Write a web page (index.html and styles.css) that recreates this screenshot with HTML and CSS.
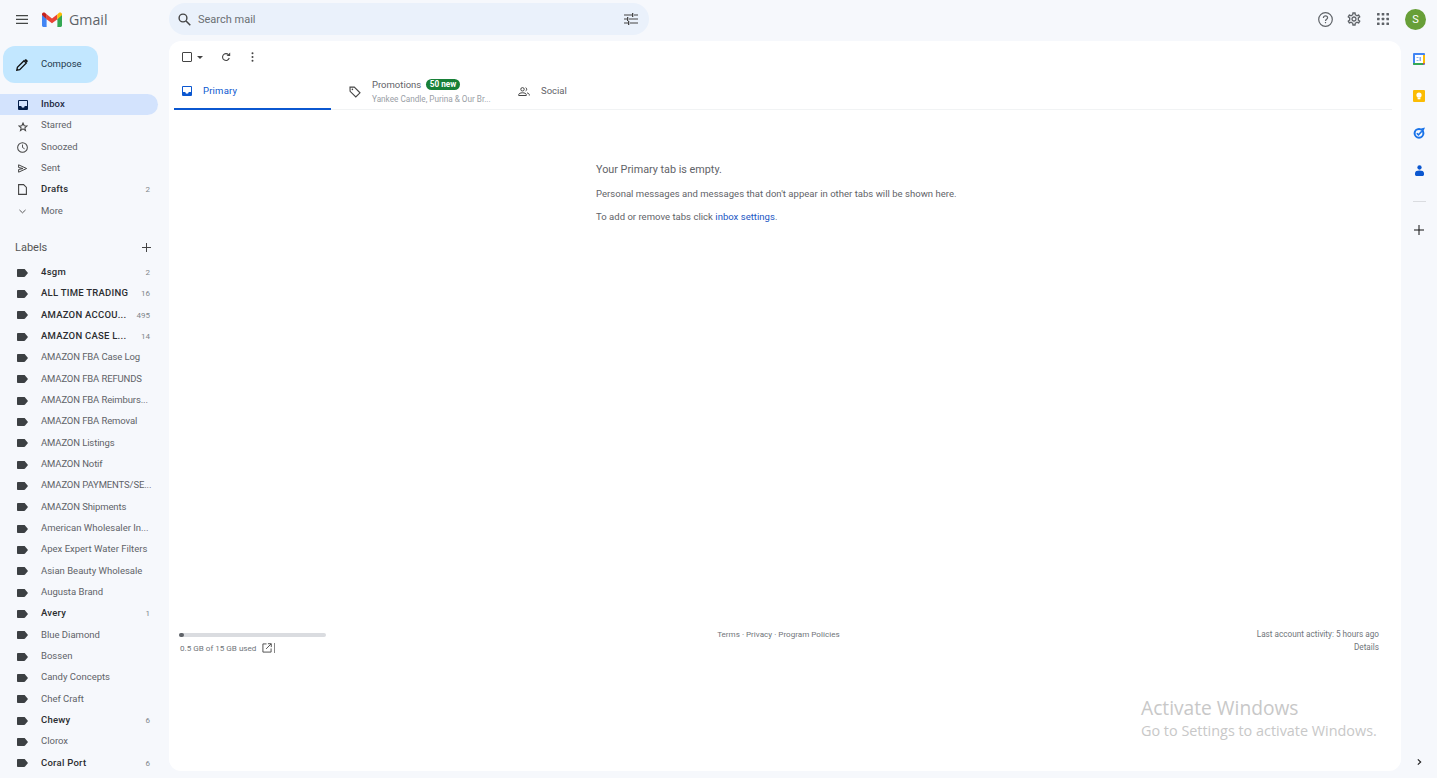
FILE: index.html
```html
<!DOCTYPE html>
<html lang="en">
<head>
<meta charset="utf-8">
<title>Gmail</title>
<link rel="stylesheet" href="styles.css">
</head>
<body>
<svg class="defs" width="0" height="0" aria-hidden="true">
  <symbol id="tag" viewBox="0 0 12 10" preserveAspectRatio="none"><path d="M1.2 0h6.6c.4 0 .8.2 1 .5L12 5 8.800 9.500c-.2.3-.6.5-1 .5H1.200C.5 10 0 9.500 0 8.800V1.200C0 .5.500 0 1.200 0z"/></symbol>
</svg>
<div class="app">
  <aside class="side">
    <div class="brand">
      <svg class="burger" viewBox="0 0 14 10" width="12" height="9" preserveAspectRatio="none"><path d="M0 0h14v1.300H0zM0 4.300h14v1.300H0zM0 8.700h14V10H0z"/></svg>
      <svg class="logo" viewBox="0 0 20 15" width="20" height="15">
        <path fill="#4285f4" d="M0 3v10.600C0 14.400.6 15 1.400 15h3.200V7.200L2 3.500z"/>
        <path fill="#34a853" d="M15.400 7.200V15h3.200c.8 0 1.400-.6 1.400-1.400V3l-2 .5z"/>
        <path fill="#ea4335" d="M4.600 7.200V2.300L10 6.400l5.400-4.100v4.900L10 11.200z"/>
        <path fill="#c5221f" d="M0 2.100V3l4.600 4.200V2.300L3.200.9C1.900-.1 0 .7 0 2.100z"/>
        <path fill="#fbbc04" d="M15.400 2.300v4.900L20 3v-.9C20 .7 18.100-.1 16.800.9z"/>
      </svg>
      <span class="brand-name">Gmail</span>
    </div>
    <button class="compose">
      <svg viewBox="0 0 12 12" width="12" height="12"><path d="M.8 11.200l.6-2.900L8 1.700l2.300 2.300-6.600 6.600z" fill="none" stroke="#111" stroke-width="1.300"/><path d="M8.400 1.200l.6-.6c.5-.5 1.100-.5 1.500-.1l1 1c.4.400.4 1-.1 1.500l-.6.600z" fill="#111"/></svg>
      <span>Compose</span>
    </button>
    <nav class="nav">
      <a class="row active"><span class="ic"><svg viewBox="0 0 10 10" width="10" height="10"><path fill="#041e49" d="M1 0h8a1 1 0 0 1 1 1v8a1 1 0 0 1-1 1H1a1 1 0 0 1-1-1V1a1 1 0 0 1 1-1zm0 6h2.300a1.700 1.700 0 0 0 3.400 0H9V1H1z"/></svg></span><span class="txt">Inbox</span></a>
      <a class="row"><span class="ic low"><svg viewBox="0 0 12 12" width="10" height="10"><path fill="none" stroke="#444" stroke-width="1.300" d="M6 1.300l1.400 3.200 3.400.3-2.600 2.200.8 3.300L6 8.300 3 10.300l.8-3.300L1.200 4.800l3.400-.3z"/></svg></span><span class="txt">Starred</span></a>
      <a class="row"><span class="ic"><svg viewBox="0 0 12 12" width="11" height="11"><circle cx="6" cy="6" r="5.300" fill="none" stroke="#444" stroke-width="1.100"/><path d="M6 2.800V6l2.300 1.400" fill="none" stroke="#444"/></svg></span><span class="txt">Snoozed</span></a>
      <a class="row"><span class="ic"><svg viewBox="0 0 10 9" width="10" height="9"><path fill="none" stroke="#444" d="M.6.8l8 3.700-8 3.700V5.500L5 4.500.6 3.500z"/></svg></span><span class="txt">Sent</span></a>
      <a class="row bold"><span class="ic"><svg viewBox="0 0 9 11" width="9" height="11"><path fill="none" stroke="#444" stroke-width="1.100" d="M.6.6h5l2.800 2.800v7H.6z"/></svg></span><span class="txt">Drafts</span><span class="num">2</span></a>
      <a class="row"><span class="ic"><svg viewBox="0 0 8 5" width="7" height="5"><path fill="none" stroke="#444" d="M.5.7L4 4 7.500.7"/></svg></span><span class="txt">More</span></a>
    </nav>
    <div class="labels-head"><span>Labels</span><svg viewBox="0 0 9 9" width="9" height="9"><path d="M4 0h1v4h4v1H5v4H4V5H0V4h4z" fill="#444"/></svg></div>
    <div class="nav">
      <a class="row bold"><span class="ic"><svg class="tag"><use href="#tag"/></svg></span><span class="txt">4sgm</span><span class="num">2</span></a>
      <a class="row bold"><span class="ic"><svg class="tag"><use href="#tag"/></svg></span><span class="txt">ALL TIME TRADING</span><span class="num">16</span></a>
      <a class="row bold"><span class="ic"><svg class="tag"><use href="#tag"/></svg></span><span class="txt">AMAZON ACCOU...</span><span class="num">495</span></a>
      <a class="row bold"><span class="ic"><svg class="tag"><use href="#tag"/></svg></span><span class="txt">AMAZON CASE L...</span><span class="num">14</span></a>
      <a class="row amz"><span class="ic"><svg class="tag"><use href="#tag"/></svg></span><span class="txt">AMAZON FBA Case Log</span></a>
      <a class="row amz"><span class="ic"><svg class="tag"><use href="#tag"/></svg></span><span class="txt">AMAZON FBA REFUNDS</span></a>
      <a class="row amz"><span class="ic"><svg class="tag"><use href="#tag"/></svg></span><span class="txt">AMAZON FBA Reimburs...</span></a>
      <a class="row amz"><span class="ic"><svg class="tag"><use href="#tag"/></svg></span><span class="txt">AMAZON FBA Removal</span></a>
      <a class="row amz"><span class="ic"><svg class="tag"><use href="#tag"/></svg></span><span class="txt">AMAZON Listings</span></a>
      <a class="row amz"><span class="ic"><svg class="tag"><use href="#tag"/></svg></span><span class="txt">AMAZON Notif</span></a>
      <a class="row amz"><span class="ic"><svg class="tag"><use href="#tag"/></svg></span><span class="txt">AMAZON PAYMENTS/SE...</span></a>
      <a class="row amz"><span class="ic"><svg class="tag"><use href="#tag"/></svg></span><span class="txt">AMAZON Shipments</span></a>
      <a class="row"><span class="ic"><svg class="tag"><use href="#tag"/></svg></span><span class="txt">American Wholesaler In...</span></a>
      <a class="row"><span class="ic"><svg class="tag"><use href="#tag"/></svg></span><span class="txt">Apex Expert Water Filters</span></a>
      <a class="row"><span class="ic"><svg class="tag"><use href="#tag"/></svg></span><span class="txt">Asian Beauty Wholesale</span></a>
      <a class="row"><span class="ic"><svg class="tag"><use href="#tag"/></svg></span><span class="txt">Augusta Brand</span></a>
      <a class="row bold"><span class="ic"><svg class="tag"><use href="#tag"/></svg></span><span class="txt">Avery</span><span class="num">1</span></a>
      <a class="row"><span class="ic"><svg class="tag"><use href="#tag"/></svg></span><span class="txt">Blue Diamond</span></a>
      <a class="row"><span class="ic"><svg class="tag"><use href="#tag"/></svg></span><span class="txt">Bossen</span></a>
      <a class="row"><span class="ic"><svg class="tag"><use href="#tag"/></svg></span><span class="txt">Candy Concepts</span></a>
      <a class="row"><span class="ic"><svg class="tag"><use href="#tag"/></svg></span><span class="txt">Chef Craft</span></a>
      <a class="row bold"><span class="ic"><svg class="tag"><use href="#tag"/></svg></span><span class="txt">Chewy</span><span class="num">6</span></a>
      <a class="row"><span class="ic"><svg class="tag"><use href="#tag"/></svg></span><span class="txt">Clorox</span></a>
      <a class="row bold"><span class="ic"><svg class="tag"><use href="#tag"/></svg></span><span class="txt">Coral Port</span><span class="num">6</span></a>
    </div>
  </aside>

  <div class="center">
    <header class="top">
      <div class="search">
        <svg viewBox="0 0 13 13" width="13" height="13"><circle cx="5" cy="5" r="3.900" fill="none" stroke="#444" stroke-width="1.400"/><path d="M8 8l4.300 4.300" stroke="#444" stroke-width="1.500"/></svg>
        <span class="search-text">Search mail</span>
        <svg class="tune" viewBox="0 0 14 12" width="14" height="12"><path fill="#444" d="M0 1.500h8v1H0zM10 1.500h4v1h-4zM8 0h1.300v4H8zM0 9.500h4v1H0zM6 9.500h8v1H6zM4 8h1.300v4H4zM0 5.500h3v1H0zM5 5.500h9v1H5zM3 4h1.300v4H3z"/></svg>
      </div>
      <div class="top-icons">
        <svg class="ti-help" viewBox="0 0 15 15" width="15" height="15"><circle cx="7.500" cy="7.500" r="6.800" fill="none" stroke="#5f6368" stroke-width="1.200"/><path d="M5.400 5.900c0-1.200 1-2 2.100-2 1.200 0 2.100.8 2.100 1.900 0 1.500-2.100 1.600-2.100 3.200" fill="none" stroke="#5f6368" stroke-width="1.200"/><path fill="#5f6368" d="M6.900 10h1.200v1.200H6.900z"/></svg>
        <svg viewBox="0 0 24 24" width="16" height="16"><path fill="#5f6368" d="M19.430 12.980c.04-.32.070-.64.070-.98 0-.34-.03-.66-.07-.98l2.110-1.650c.19-.15.240-.42.120-.64l-2-3.460c-.09-.16-.26-.25-.44-.25-.06 0-.12.010-.17.030l-2.490 1c-.52-.4-1.080-.73-1.690-.98l-.38-2.650C14.460 2.180 14.250 2 14 2h-4c-.25 0-.46.180-.49.420l-.38 2.650c-.61.250-1.170.590-1.690.980l-2.490-1c-.06-.02-.12-.03-.18-.03-.17 0-.34.090-.43.250l-2 3.460c-.13.220-.07.490.12.640l2.110 1.650c-.04.320-.07.650-.07.980 0 .330.030.660.070.980l-2.110 1.650c-.19.150-.24.420-.12.640l2 3.460c.09.160.26.250.44.250.06 0 .12-.01.17-.03l2.490-1c.52.400 1.080.730 1.690.980l.38 2.650c.03.240.24.420.49.420h4c.25 0 .46-.18.49-.42l.38-2.650c.61-.25 1.170-.59 1.690-.98l2.490 1c.06.020.12.030.18.030.17 0 .34-.09.43-.25l2-3.460c.12-.22.070-.49-.12-.64l-2.110-1.650zm-1.980-1.710c.04.310.05.520.05.730 0 .210-.02.430-.05.730l-.14 1.130.89.700 1.080.840-.7 1.210-1.270-.51-1.040-.42-.9.680c-.43.320-.84.560-1.250.730l-1.060.430-.16 1.130-.2 1.350h-1.400l-.19-1.350-.16-1.130-1.060-.43c-.43-.18-.83-.41-1.230-.71l-.91-.7-1.060.430-1.270.510-.7-1.210 1.080-.84.890-.7-.14-1.130c-.03-.31-.05-.54-.05-.74s.020-.43.050-.73l.14-1.130-.89-.7-1.080-.84.7-1.210 1.270.510 1.040.420.9-.68c.43-.32.84-.56 1.250-.73l1.060-.43.160-1.130.2-1.350h1.390l.19 1.350.16 1.130 1.060.43c.43.180.83.410 1.230.710l.91.700 1.060-.43 1.270-.51.7 1.210-1.070.850-.89.700.14 1.130zM12 8c-2.210 0-4 1.790-4 4s1.790 4 4 4 4-1.790 4-4-1.790-4-4-4zm0 6c-1.100 0-2-.9-2-2s.9-2 2-2 2 .9 2 2-.9 2-2 2z"/></svg>
        <svg class="ti-apps" viewBox="0 0 12 12" width="12" height="12"><g fill="#5f6368"><rect width="2.600" height="2.600" rx=".5"/><rect x="4.700" width="2.600" height="2.600" rx=".5"/><rect x="9.400" width="2.600" height="2.600" rx=".5"/><rect y="4.700" width="2.600" height="2.600" rx=".5"/><rect x="4.700" y="4.700" width="2.600" height="2.600" rx=".5"/><rect x="9.400" y="4.700" width="2.600" height="2.600" rx=".5"/><rect y="9.400" width="2.600" height="2.600" rx=".5"/><rect x="4.700" y="9.400" width="2.600" height="2.600" rx=".5"/><rect x="9.400" y="9.400" width="2.600" height="2.600" rx=".5"/></g></svg>
        <span class="avatar">S</span>
      </div>
    </header>
    <main class="card">
      <div class="toolbar">
        <span class="check"></span>
        <span class="caret"></span>
        <svg class="refresh" viewBox="0 0 12 12" width="10" height="10"><path fill="none" stroke="#444" stroke-width="1.300" d="M9.900 7.200A4.100 4.100 0 1 1 9 3.300"/><path fill="#444" d="M11 .6v4.300H6.700z"/></svg>
        <svg class="dots" viewBox="0 0 3 11" width="3" height="10"><g fill="#444"><circle cx="1.500" cy="1.300" r="1.100"/><circle cx="1.500" cy="5.500" r="1.100"/><circle cx="1.500" cy="9.700" r="1.100"/></g></svg>
      </div>
      <div class="tabs">
        <div class="tab tab-primary">
          <svg viewBox="0 0 10 10" width="10" height="10"><path fill="#0b57d0" d="M1 0h8a1 1 0 0 1 1 1v8a1 1 0 0 1-1 1H1a1 1 0 0 1-1-1V1a1 1 0 0 1 1-1zm0 6h2.300a1.700 1.700 0 0 0 3.400 0H9V1H1z"/></svg>
          <span>Primary</span>
        </div>
        <div class="tab tab-promo">
          <svg viewBox="0 0 12 12" width="12" height="12"><path fill="none" stroke="#444" stroke-width="1.100" d="M1 1.100h4.300l5.700 5.700-4.200 4.200L1.100 5.300z"/><circle cx="3.400" cy="3.400" r=".8" fill="#444"/></svg>
          <div class="promo-text">
            <div class="promo-line"><span>Promotions</span><span class="badge">50 new</span></div>
            <div class="promo-sub">Yankee Candle, Purina &amp; Our Br...</div>
          </div>
        </div>
        <div class="tab tab-social">
          <svg viewBox="0 0 12 9" width="12" height="9"><g fill="none" stroke="#444"><circle cx="4.500" cy="2.300" r="1.700"/><path d="M.7 8.500V7.700c0-1.200 1.700-1.900 3.800-1.900s3.800.7 3.800 1.900v.8z"/><path d="M7.600.7a1.700 1.700 0 0 1 0 3.200M9 5.900c1.300.3 2.300.9 2.300 1.800v.8"/></g></svg>
          <span>Social</span>
        </div>
      </div>
      <section class="empty">
        <h2>Your Primary tab is empty.</h2>
        <p>Personal messages and messages that don't appear in other tabs will be shown here.</p>
        <p>To add or remove tabs click <a>inbox settings</a>.</p>
      </section>
      <footer class="foot">
        <div class="storage">
          <div class="bar"><div class="bar-fill"></div></div>
          <div class="used"><span>0.5 GB of 15 GB used</span>
            <svg viewBox="0 0 11 11" width="10" height="10"><path fill="none" stroke="#444" d="M5 1H1v9h9V6"/><path fill="none" stroke="#444" d="M4.500 6.500L10 1M6.500 .8h3.700v3.700"/></svg><i class="tick"></i></div>
        </div>
        <div class="terms">Terms · Privacy · Program Policies</div>
        <div class="activity"><div>Last account activity: 5 hours ago</div><div>Details</div></div>
      </footer>
      <div class="activate">
        <div class="a1">Activate Windows</div>
        <div class="a2">Go to Settings to activate Windows.</div>
      </div>
    </main>
  </div>

  <aside class="rail">
    <svg viewBox="0 0 12 12" width="12" height="12"><rect width="12" height="12" rx="1" fill="#4285f4"/><rect x="2" y="2" width="8" height="8" fill="#fff"/><path fill="#34a853" d="M0 10h10v2H1a1 1 0 0 1-1-1z"/><path fill="#fbbc04" d="M10 2h2v8h-2z"/><path fill="#ea4335" d="M10 10h2l-2 2z"/><path fill="#8ab0ee" d="M3.500 4h2v1h-2zM3.500 7h2v1h-2zM6.500 4h1.500v4H6.500z"/></svg>
    <svg viewBox="0 0 12 12" width="12" height="12"><rect width="12" height="12" rx="1" fill="#fbbc04"/><circle cx="6" cy="5" r="2.600" fill="#fff"/><rect x="4.600" y="7.500" width="2.800" height="1.800" fill="#fff"/></svg>
    <svg viewBox="0 0 12 12" width="12" height="12"><circle cx="6" cy="6.300" r="4.400" fill="none" stroke="#1a73e8" stroke-width="2"/><path fill="#1a73e8" d="M12 .5L10.500 4 8 1.500z"/><path d="M3.800 6.200l1.700 1.700 3.300-3.600" fill="none" stroke="#1a73e8" stroke-width="1.600"/></svg>
    <svg class="rail-person" viewBox="0 0 10 12" width="9" height="11"><circle cx="5" cy="2.700" r="2.400" fill="#0b57d0"/><path fill="#0b57d0" d="M0 9c0-2.200 2.200-3 5-3s5 .8 5 3v1.500c0 .8-.6 1.500-1.400 1.500H1.400C.6 12 0 11.300 0 10.500z"/></svg>
    <i class="rail-sep"></i>
    <svg viewBox="0 0 10 10" width="10" height="10"><path d="M4.500 0h1v4.500H10v1H5.500V10h-1V5.500H0v-1h4.500z" fill="#111"/></svg>
    <svg class="rail-chev" viewBox="0 0 6 8" width="5" height="8"><path fill="none" stroke="#222" stroke-width="1.400" d="M1 .8L4.400 4 1 7.200"/></svg>
  </aside>
</div>
</body>
</html>
```

FILE: styles.css
```css
* { box-sizing: border-box; }
html, body { margin: 0; height: 100%; overflow: hidden; }
body { background: #f6f8fc; color: #444746; font-family: Roboto, "Liberation Sans", sans-serif; font-size: 9.5px; }
.defs { position: absolute; }
.app { display: grid; grid-template-columns: 169px 1fr 36px; height: 778px; overflow: hidden; }

.side { height: 778px; overflow: hidden; }
.brand { height: 41px; padding: 0 0 2px 16px; display: flex; align-items: center; }
.burger { fill: #444746; flex: none; }
.logo { margin-left: 14px; flex: none; }
.brand-name { margin-left: 7px; font-size: 14.2px; color: #5f6368; font-family: "Open Sans", sans-serif; }
.compose { margin: 5px 0 0 3px; width: 95px; height: 37px; border: 0; border-radius: 12px; background: #c2e7ff; display: flex; align-items: center; padding: 0 0 0 13px; gap: 13px; font: inherit; color: #1f3a4d; }
.compose span { margin-bottom: 2px; }
.compose + .nav { margin-top: 11px; }
.row { display: flex; align-items: center; height: 21.33px; padding: 0 8px 0 0; width: 158px; border-radius: 0 11px 11px 0; white-space: nowrap; color: #5f6368; }
.row .ic { width: 41px; flex: none; display: flex; justify-content: center; padding-left: 4px; }
.row .ic.low { margin-top: 3px; }
.row .txt { flex: 1; min-width: 0; margin-bottom: 2px; }
.row.amz .txt { letter-spacing: -0.12px; }
.row .num { flex: none; font-size: 8px; color: #80868b; margin-left: 8px; }
.row.bold .txt { font-weight: 500; letter-spacing: 0.25px; color: #2b2d30; }
.row.active { background: #d3e3fd; }
.row.active .txt { font-weight: 500; letter-spacing: 0.1px; color: #1f2a44; }
.tag { width: 11px; height: 8px; fill: #3c4043; }
.labels-head { display: flex; justify-content: space-between; align-items: center; padding: 0 18px 0 15px; height: 21px; margin-top: 15px; margin-bottom: 4px; font-size: 11px; color: #555; }

.center { display: flex; flex-direction: column; min-width: 0; }
.top { height: 41px; flex: none; display: flex; align-items: flex-start; justify-content: space-between; padding-top: 3px; }
.search { width: 480px; height: 32px; border-radius: 16px; background: #eaf1fb; display: flex; align-items: center; padding: 0 11px 0 9px; gap: 7px; }
.search-text { flex: 1; font-size: 11px; color: #6b6f73; }
.top-icons { display: flex; align-items: center; gap: 15px; height: 32px; margin-right: -25px; }
.ti-help { margin-right: -2px; }
.ti-apps { margin-right: 1px; }
.avatar { width: 21px; height: 21px; border-radius: 50%; background: #689f38; color: #fff; display: flex; align-items: center; justify-content: center; font-size: 11px; }

.card { position: relative; height: 730px; background: #fff; border-radius: 12px; display: flex; flex-direction: column; }
.toolbar { height: 32px; flex: none; display: flex; align-items: center; padding-left: 13px; }
.check { width: 10px; height: 10px; border: 1px solid #444; border-radius: 1px; }
.caret { margin-left: 5px; border: 3px solid transparent; border-top-color: #444; border-bottom: 0; }
.refresh { margin-left: 18px; }
.dots { margin-left: 20px; }
.tabs { height: 37px; flex: none; display: flex; margin: 0 9px 0 5px; border-bottom: 1px solid #f1f3f4; }
.tab { display: flex; align-items: center; height: 37px; flex: none; color: #5f6368; }
.tab-primary { width: 157px; padding-left: 8px; gap: 11px; border-bottom: 2px solid #0b57d0; color: #0b57d0; letter-spacing: 0.2px; }
.tab-promo { width: 169px; padding-left: 18px; gap: 11px; }
.tab-social { gap: 11px; margin-left: 18px; }
.tab-social span { margin-bottom: 2px; }
.promo-text { display: flex; flex-direction: column; gap: 4px; }
.promo-line { display: flex; align-items: center; gap: 5px; }
.badge { background: #188038; color: #fff; border-radius: 6px; padding: 0 3.5px; font-size: 8.2px; font-weight: 700; line-height: 11px; }
.promo-sub { font-size: 8.2px; color: #9aa0a6; white-space: nowrap; }
.empty { height: 521px; flex: none; padding: 53px 0 0 427px; }
.empty h2 { margin: 0 0 11px; font-size: 10.8px; line-height: 14px; font-weight: 400; color: #5f6368; }
.empty p { margin: 0 0 12px; font-size: 9.5px; line-height: 11px; color: #5f6368; letter-spacing: 0.025px; }
.empty a { color: #1a56c4; }
.foot { display: flex; justify-content: space-between; padding: 0 22px 0 10px; font-size: 8.1px; color: #70757a; }
.storage { width: 147px; }
.bar { height: 4px; background: #dadce0; border-radius: 2px; margin-top: 2px; }
.bar-fill { width: 5px; height: 4px; border-radius: 2px; background: #5f6368; }
.used { display: flex; align-items: center; margin-top: 4px; height: 13px; padding-left: 1px; }
.used svg { margin-left: 6px; }
.tick { width: 1px; height: 10px; background: #888; margin-left: 2px; }
.terms { margin-right: 26px; margin-top: -2px; line-height: 11px; }
.activity { text-align: right; line-height: 13px; margin-top: -3px; font-size: 8.2px; }
.activate { position: absolute; left: 972px; top: 654px; color: #c8c8c8; font-family: "Open Sans", sans-serif; white-space: nowrap; }
.a1 { font-size: 19.2px; line-height: 26px; }
.a2 { font-size: 14.4px; line-height: 20px; }

.rail { position: relative; display: flex; flex-direction: column; align-items: center; padding-top: 53px; }
.rail > svg { flex: none; margin-bottom: 25px; }
.rail .rail-person { margin-top: 1px; }
.rail-sep { width: 13px; height: 1px; background: #dadce0; margin: 0 0 23px; }
.rail .rail-chev { position: absolute; top: 758px; left: 16px; margin: 0; }
```
